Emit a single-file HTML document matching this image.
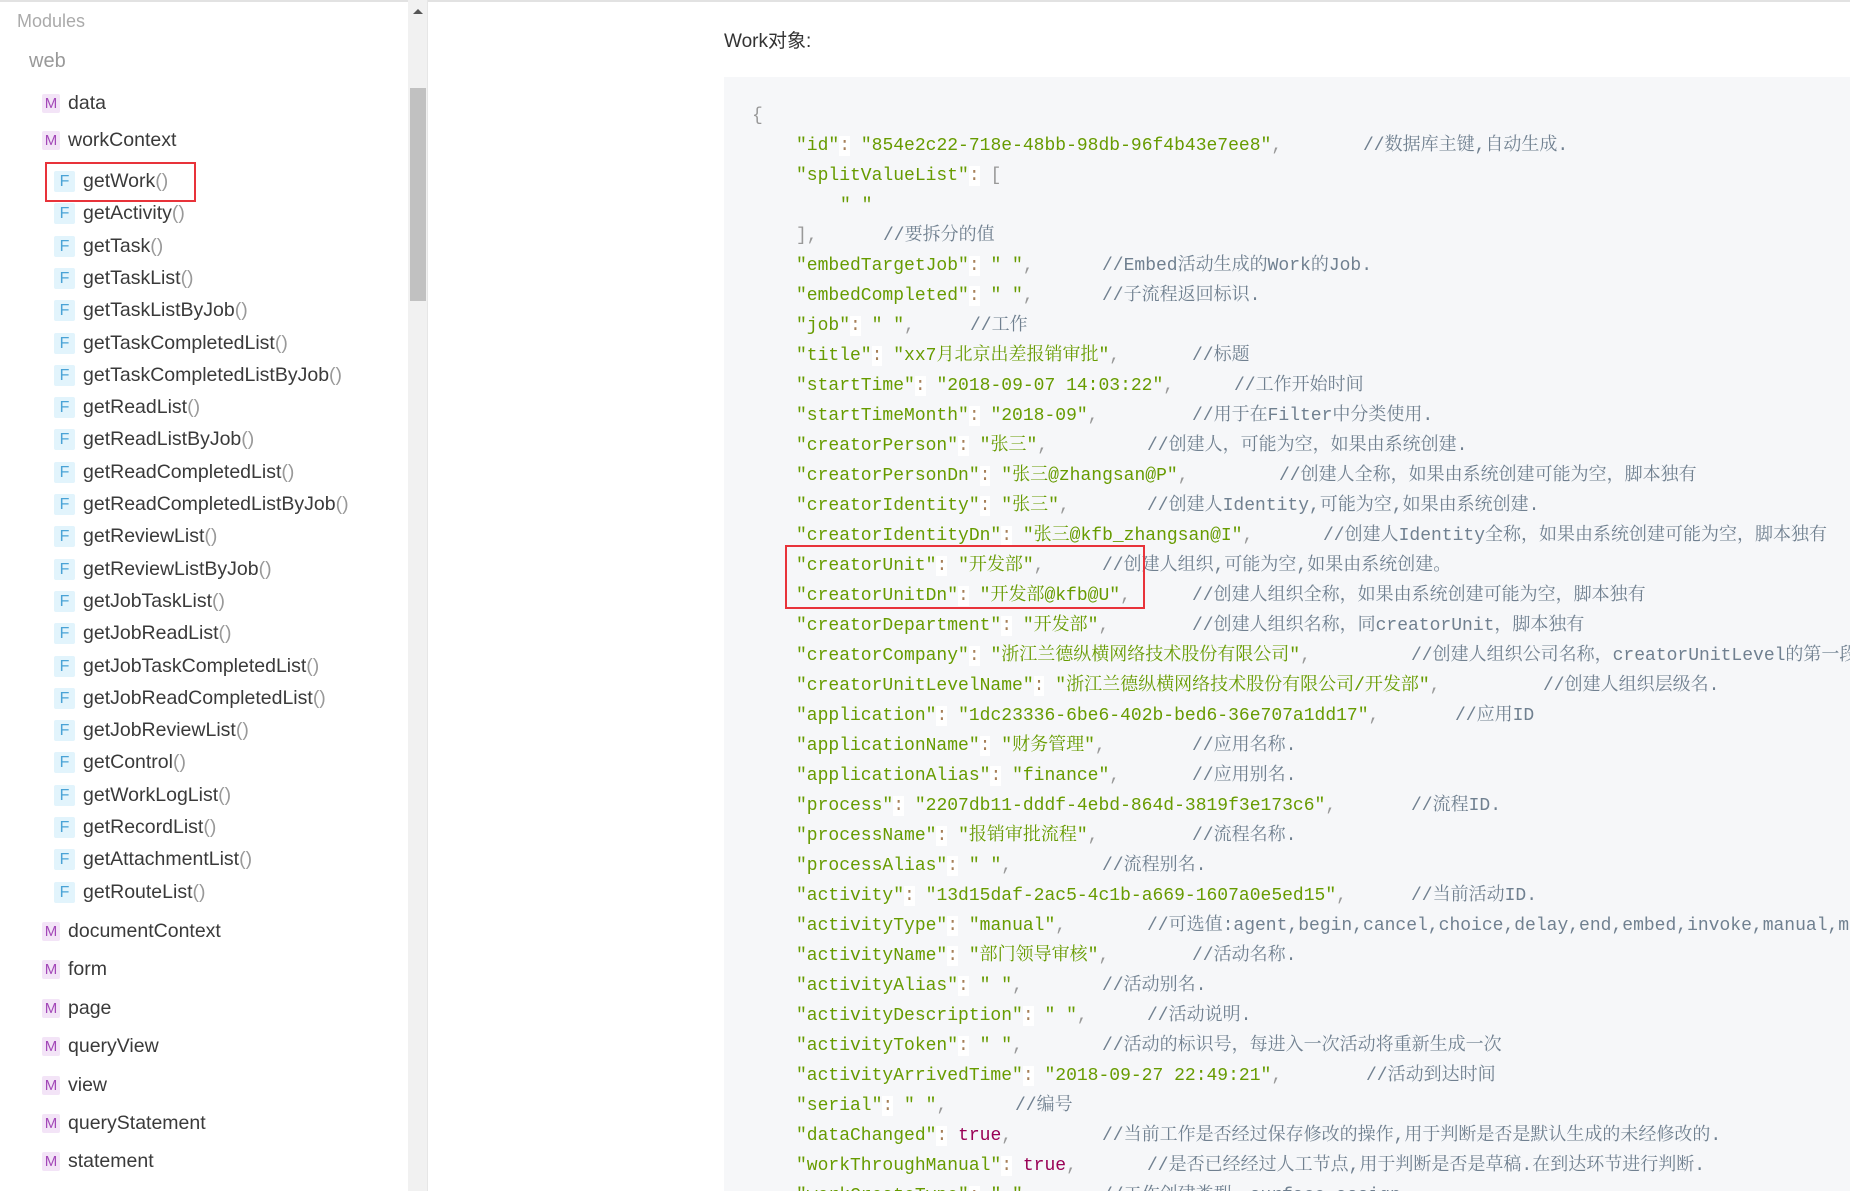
<!DOCTYPE html>
<html><head><meta charset="utf-8"><style>
*{margin:0;padding:0;box-sizing:border-box}
html,body{width:1850px;height:1191px;overflow:hidden;background:#fff;position:relative}
body{font-family:"Liberation Sans","Noto Sans CJK SC",sans-serif}
.top{position:absolute;left:0;top:0;width:1850px;height:2px;background:#e2e2e2}
.side{position:absolute;left:0;top:0;width:408px;height:1191px}
.it{position:absolute;height:32px;line-height:32px;font-size:19.5px;color:#3a3a3a;white-space:nowrap}
.it i{font-style:normal;color:#999}
.ic{position:absolute;height:19px;width:18px;line-height:19px;text-align:center;font-size:15px;border-radius:2px}
.m{background:#f3e4f7;color:#a348b8}
.f{background:#e2f4fc;color:#4aa3d6;width:21px;height:21px;line-height:21px;font-size:16px}
.sb{position:absolute;left:408px;top:0;width:20px;height:1191px;background:#f1f1f1;border-right:1px solid #e6e6e6}
.th{position:absolute;left:410px;top:88px;width:16px;height:213px;background:#c1c1c1}
.red{position:absolute;border:2px solid #e8333a}
.code{position:absolute;left:724px;top:77px;width:1126px;height:1114px;background:#f6f7f9}
.ln{position:absolute;left:0;height:30px;line-height:30px;font-family:"Liberation Mono","Noto Serif CJK SC",monospace;font-size:18px;white-space:pre;color:#666}
.k{color:#679b00}.s{color:#679b00}.o{color:#a67f59;background:#fff}.p{color:#999}.b{color:#905}
.c{position:absolute;top:0;color:#708090;font-family:"Liberation Mono","Noto Serif CJK SC",monospace}
</style></head><body>
<div class="top"></div>
<div class="side">
<div style="position:absolute;left:17px;top:11px;font-size:18px;color:#aaa">Modules</div>
<div style="position:absolute;left:29px;top:50px;font-size:20px;color:#999">web</div>

<div class="ic m" style="left:42px;top:94px">M</div><div class="it" style="left:68px;top:87px">data</div>
<div class="ic m" style="left:42px;top:131px">M</div><div class="it" style="left:68px;top:124px">workContext</div>
</div>
<div id="fl"></div>
<div class="red" style="left:45px;top:162px;width:151px;height:40px"></div>
<div class="sb"><div style="position:absolute;left:5px;top:9px;width:0;height:0;border-left:5px solid transparent;border-right:5px solid transparent;border-bottom:5px solid #555"></div></div>
<div class="th"></div>

<div style="position:absolute;left:724px;top:26px;font-size:19px;color:#333">Work对象:</div>
<div class="code"></div>
<div id="cl"></div>
<div class="red" style="left:785px;top:545px;width:360px;height:64px"></div>
<script>
var F=["getWork","getActivity","getTask","getTaskList","getTaskListByJob","getTaskCompletedList","getTaskCompletedListByJob","getReadList","getReadListByJob","getReadCompletedList","getReadCompletedListByJob","getReviewList","getReviewListByJob","getJobTaskList","getJobReadList","getJobTaskCompletedList","getJobReadCompletedList","getJobReviewList","getControl","getWorkLogList","getRecordList","getAttachmentList","getRouteList"];
var h="";
F.forEach(function(n,i){var c=181+i*32.3;h+='<div class="ic f" style="left:54px;top:'+(c-10)+'px">F</div><div class="it" style="left:83px;top:'+(c-16)+'px">'+n+'<i>()</i></div>';});
["documentContext","form","page","queryView","view","queryStatement","statement","x"].forEach(function(n,i){var c=931+i*38.4;h+='<div class="ic m" style="left:42px;top:'+(c-9)+'px">M</div>'+(n=="x"?'':'<div class="it" style="left:68px;top:'+(c-16)+'px">'+n+'</div>');});
document.getElementById("fl").outerHTML=h;
function kv(k,v,t){var vs=t=="b"?'<span class="b">'+v+'</span>':'<span class="s">"'+v+'"</span>';return '<span class="k">"'+k+'"</span><span class="o">:</span> '+vs+'<span class="p">,</span>';}
var L=[
[752,'<span class="p">{</span>'],
[796,kv("id","854e2c22-718e-48bb-98db-96f4b43e7ee8"),1363,"//数据库主键,自动生成."],
[796,'<span class="k">"splitValueList"</span><span class="o">:</span> <span class="p">[</span>'],
[840,'<span class="s">" "</span>'],
[796,'<span class="p">],</span>',883,"//要拆分的值"],
[796,kv("embedTargetJob"," "),1102,"//Embed活动生成的Work的Job."],
[796,kv("embedCompleted"," "),1102,"//子流程返回标识."],
[796,kv("job"," "),970,"//工作"],
[796,kv("title","xx7月北京出差报销审批"),1192,"//标题"],
[796,kv("startTime","2018-09-07 14:03:22"),1234,"//工作开始时间"],
[796,kv("startTimeMonth","2018-09"),1192,"//用于在Filter中分类使用."],
[796,kv("creatorPerson","张三"),1147,"//创建人，可能为空，如果由系统创建."],
[796,kv("creatorPersonDn","张三@zhangsan@P"),1279,"//创建人全称，如果由系统创建可能为空，脚本独有"],
[796,kv("creatorIdentity","张三"),1147,"//创建人Identity,可能为空,如果由系统创建."],
[796,kv("creatorIdentityDn","张三@kfb_zhangsan@I"),1323,"//创建人Identity全称，如果由系统创建可能为空，脚本独有"],
[796,kv("creatorUnit","开发部"),1102,"//创建人组织,可能为空,如果由系统创建。"],
[796,kv("creatorUnitDn","开发部@kfb@U"),1192,"//创建人组织全称，如果由系统创建可能为空，脚本独有"],
[796,kv("creatorDepartment","开发部"),1192,"//创建人组织名称，同creatorUnit，脚本独有"],
[796,kv("creatorCompany","浙江兰德纵横网络技术股份有限公司"),1411,"//创建人组织公司名称，creatorUnitLevel的第一段"],
[796,kv("creatorUnitLevelName","浙江兰德纵横网络技术股份有限公司/开发部"),1543,"//创建人组织层级名."],
[796,kv("application","1dc23336-6be6-402b-bed6-36e707a1dd17"),1455,"//应用ID"],
[796,kv("applicationName","财务管理"),1192,"//应用名称."],
[796,kv("applicationAlias","finance"),1192,"//应用别名."],
[796,kv("process","2207db11-dddf-4ebd-864d-3819f3e173c6"),1411,"//流程ID."],
[796,kv("processName","报销审批流程"),1192,"//流程名称."],
[796,kv("processAlias"," "),1102,"//流程别名."],
[796,kv("activity","13d15daf-2ac5-4c1b-a669-1607a0e5ed15"),1411,"//当前活动ID."],
[796,kv("activityType","manual"),1147,"//可选值:agent,begin,cancel,choice,delay,end,embed,invoke,manual,merge"],
[796,kv("activityName","部门领导审核"),1192,"//活动名称."],
[796,kv("activityAlias"," "),1102,"//活动别名."],
[796,kv("activityDescription"," "),1147,"//活动说明."],
[796,kv("activityToken"," "),1102,"//活动的标识号，每进入一次活动将重新生成一次"],
[796,kv("activityArrivedTime","2018-09-27 22:49:21"),1366,"//活动到达时间"],
[796,kv("serial"," "),1015,"//编号"],
[796,kv("dataChanged","true","b"),1102,"//当前工作是否经过保存修改的操作,用于判断是否是默认生成的未经修改的."],
[796,kv("workThroughManual","true","b"),1147,"//是否已经经过人工节点,用于判断是否是草稿.在到达环节进行判断."],
[796,kv("workCreateType"," "),1102,"//工作创建类型，surface,assign"]
];
var s="";
L.forEach(function(l,i){var top=101+i*30;s+='<div class="ln" style="top:'+top+'px;width:1850px;padding-left:'+l[0]+'px">'+l[1]+(l[2]?'<span class="c" style="left:'+l[2]+'px">'+l[3]+'</span>':'')+'</div>';});
document.getElementById("cl").outerHTML=s;
</script>
</body></html>
